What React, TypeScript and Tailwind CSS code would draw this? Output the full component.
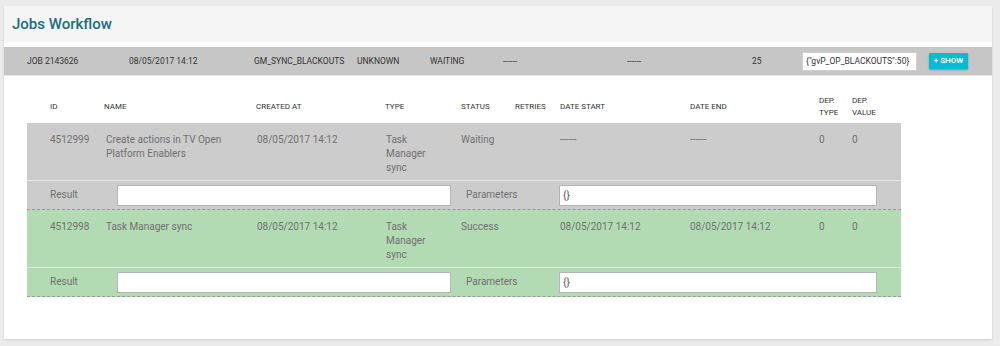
import React from 'react';

const cols = 'grid grid-cols-[54px_152px_129px_76px_54px_45px_130px_129px_33px_50px]';

const headers = ['ID', 'NAME', 'CREATED AT', 'TYPE', 'STATUS', 'RETRIES', 'DATE START', 'DATE END', 'DEP. TYPE', 'DEP. VALUE'];

const tasks = [
  {
    id: '4512999',
    name: 'Create actions in TV Open Platform Enablers',
    created: '08/05/2017 14:12',
    type: 'Task Manager sync',
    status: 'Waiting',
    retries: '',
    start: '------',
    end: '------',
    depType: '0',
    depValue: '0',
    bg: 'bg-[#cccccc]',
  },
  {
    id: '4512998',
    name: 'Task Manager sync',
    created: '08/05/2017 14:12',
    type: 'Task Manager sync',
    status: 'Success',
    retries: '',
    start: '08/05/2017 14:12',
    end: '08/05/2017 14:12',
    depType: '0',
    depValue: '0',
    bg: 'bg-[#b3dbb3]',
  },
];

export default function App() {
  return (
    <div className="min-h-[346px] bg-[#ebebeb] pt-[6px] pl-[4px] pr-[8px] pb-[7px] font-['Roboto',sans-serif]">
      <div className="bg-white shadow-[0_1px_2px_rgba(0,0,0,0.12)] h-[333px]">
        <div className="bg-[#f5f5f5] h-[36px] flex items-center pl-[8px]">
          <h1 className="text-[15px] font-medium text-[#1a6e7e]">Jobs Workflow</h1>
        </div>
        <div className="mt-[5px] bg-[#c6c6c6] h-[29px] flex items-center pl-[23px] text-[8.5px] text-[#333] uppercase border-b border-[#e4e4e4]">
          <span className="w-[102px]">JOB 2143626</span>
          <span className="w-[125px]">08/05/2017 14:12</span>
          <span className="w-[103px]">GM_SYNC_BLACKOUTS</span>
          <span className="w-[73px]">UNKNOWN</span>
          <span className="w-[73px]">WAITING</span>
          <span className="w-[124px]">------</span>
          <span className="w-[125px]">------</span>
          <span className="w-[50px]">25</span>
          <input
            readOnly
            value='{"gvP_OP_BLACKOUTS":50}'
            className="w-[115px] h-[19px] bg-white border border-[#d0d0d0] px-[3px] text-[8.5px] text-[#333] normal-case outline-none"
          />
          <button className="ml-[12px] w-[39px] h-[16px] bg-[#00bcd4] text-white font-bold text-[8px] rounded-[1px] shadow-[0_1px_2px_rgba(0,0,0,0.3)]">
            + SHOW
          </button>
        </div>

        <div className="ml-[23px] w-[874px] mt-[15px]">
          <div className={`${cols} pl-[23px] h-[32px] items-center text-[8px] text-[#333] uppercase leading-[12px]`}>
            {headers.map((h) => (
              <div key={h} className="pr-[8px]">
                {h === 'DEP. TYPE' ? (
                  <>DEP.<br />TYPE</>
                ) : h === 'DEP. VALUE' ? (
                  <>DEP.<br />VALUE</>
                ) : (
                  h
                )}
              </div>
            ))}
          </div>

          {tasks.map((t) => (
            <div key={t.id} className={`${t.bg} text-[10px] text-[#707070]`}>
              <div className={`${cols} pl-[23px] pt-[10px] h-[57px] leading-[14px]`}>
                <div className="pr-[8px]">{t.id}</div>
                <div className="pl-[2px] pr-[8px]">{t.name}</div>
                <div className="pl-[1px] pr-[8px]">{t.created}</div>
                <div className="pl-[1px] pr-[18px]">{t.type}</div>
                <div className="pr-[8px]">{t.status}</div>
                <div className="pr-[8px]">{t.retries}</div>
                <div className="pr-[8px]">{t.start}</div>
                <div className="pr-[8px]">{t.end}</div>
                <div className="pr-[8px]">{t.depType}</div>
                <div className="pr-[8px]">{t.depValue}</div>
              </div>
              <div className="h-px bg-white/50" />
              <div className="h-[29px] flex items-center pl-[23px] border-b border-dashed border-[#9a9a9a]">
                <span className="w-[67px] -mt-[2px]">Result</span>
                <input readOnly value="" className="w-[334px] h-[21px] bg-white border border-[#b5b5b5] outline-none" />
                <span className="ml-[15px] w-[93px] -mt-[2px]">Parameters</span>
                <input
                  readOnly
                  value="{}"
                  className="w-[318px] h-[21px] bg-white border border-[#b5b5b5] px-[3px] text-[10px] text-[#555] outline-none"
                />
              </div>
            </div>
          ))}
        </div>
      </div>
    </div>
  );
}
